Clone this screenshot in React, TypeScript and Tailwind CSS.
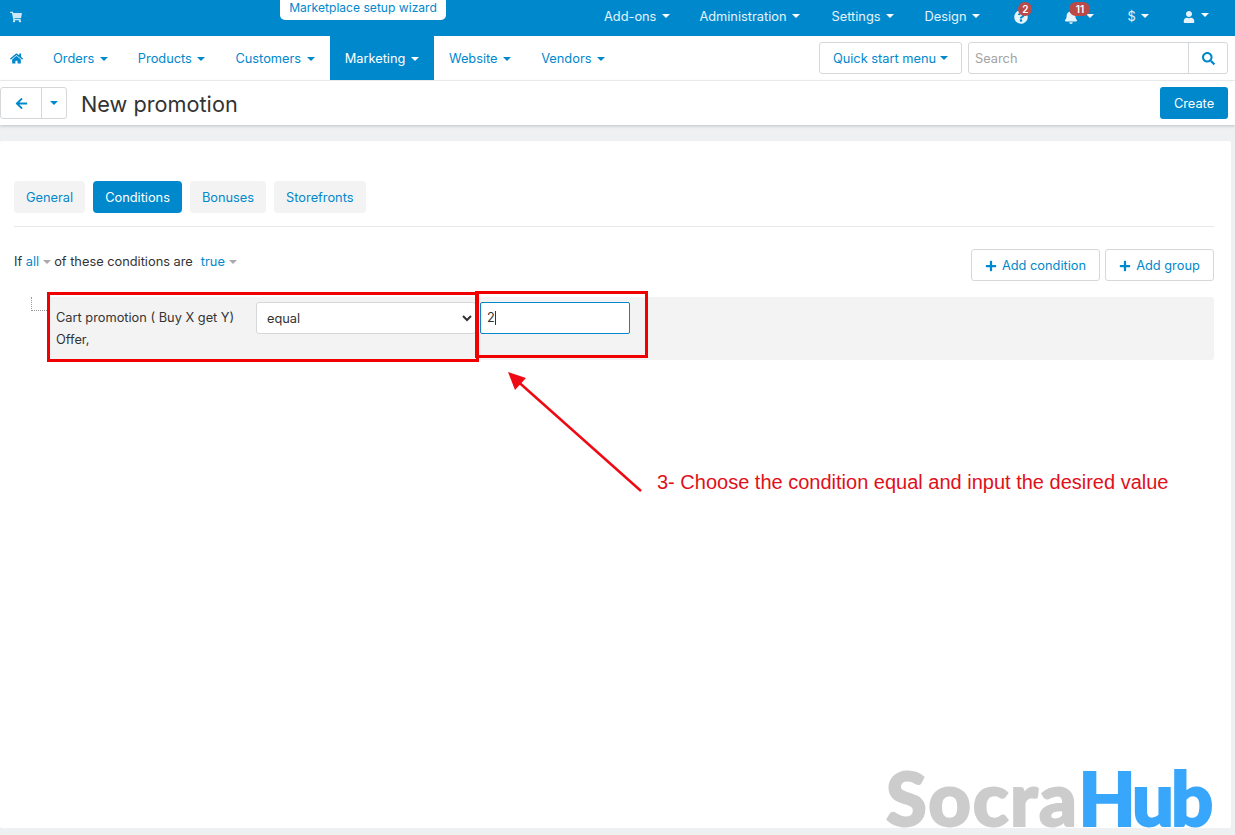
import { FaShoppingCart, FaHome, FaArrowLeft, FaPlus, FaSearch, FaBell, FaUser, FaQuestionCircle } from "react-icons/fa";

const topLinks = [
  { label: "Add-ons", gap: "mr-[29px]" },
  { label: "Administration", gap: "mr-[31px]" },
  { label: "Settings", gap: "mr-[30px]" },
  { label: "Design", gap: "mr-[34px]" },
];

const navLinks = ["Orders", "Products", "Customers", "Marketing", "Website", "Vendors"];

const tabs = ["General", "Conditions", "Bonuses", "Storefronts"];

function Caret({ className = "border-t-white" }: { className?: string }) {
  return <span className={`inline-block w-0 h-0 border-x-[4px] border-x-transparent border-t-[4px] ${className}`} />;
}

function Badge({ children, className }: { children: React.ReactNode; className: string }) {
  return (
    <span className={`absolute -top-[8px] h-[14px] rounded-full bg-[#b94a48] text-white text-[10px] font-semibold leading-[14px] text-center ${className}`}>
      {children}
    </span>
  );
}

export default function App() {
  return (
    <div className="relative w-[1235px] h-[835px] overflow-hidden bg-[#eef0f2] text-[12.8px] text-[#333] font-['Inter','Roboto',sans-serif]">
      {/* Top bar */}
      <header className="h-9 bg-[#0088cc] flex items-start text-white/90">
        <FaShoppingCart size={12} className="ml-[10px] mt-[11px] text-white/80" />
        <a className="ml-[258px] w-[166px] h-5 bg-white rounded-b-[5px] text-[#0088cc] text-center leading-[15px] text-[12.1px]">
          Marketplace setup wizard
        </a>
        <nav className="ml-[158px] flex items-center h-9 pb-[2px]">
          {topLinks.map(({ label, gap }) => (
            <span key={label} className={`flex items-center gap-[6px] ${gap}`}>
              {label}
              <Caret className="border-t-white -mt-[3px]" />
            </span>
          ))}
          <span className="relative mr-[36px]">
            <FaQuestionCircle size={14} />
            <Badge className="left-[4px] w-[14px]">2</Badge>
          </span>
          <span className="relative flex items-center gap-[8px] mr-[33px]">
            <FaBell size={14} />
            <Caret className="border-t-white -mt-[3px]" />
            <Badge className="left-[5px] w-[21px]">11</Badge>
          </span>
          <span className="flex items-center gap-[5px] mr-[34px]">
            $
            <Caret className="border-t-white -mt-[3px]" />
          </span>
          <span className="flex items-center gap-[6px] -mt-[1px]">
            <FaUser size={12} />
            <Caret className="border-t-white -mt-[3px]" />
          </span>
        </nav>
      </header>

      {/* Main nav */}
      <div className="h-[45px] bg-white border-b border-[#f0f0f0] flex items-stretch text-[#0088cc]">
        <span className="w-[38px] flex items-center pl-[10px]">
          <FaHome size={13} />
        </span>
        {navLinks.map((label) => (
          <a
            key={label}
            className={`flex items-center gap-[5.6px] px-[15px] pt-[2px] ${label === "Marketing" ? "bg-[#0088cc] text-white" : ""}`}
          >
            {label}
            <Caret className={label === "Marketing" ? "border-t-white" : "border-t-[#0088cc]"} />
          </a>
        ))}
        <div className="ml-auto flex items-center pr-[7px]">
          <button className="w-[143px] h-8 rounded-[3px] border border-[#d5d8db] pt-[2px] flex items-center justify-center gap-[4px]">
            Quick start menu
            <Caret className="border-t-[#0088cc] -mt-[2px]" />
          </button>
          <div className="ml-[6px] w-[260px] h-8 flex rounded-[3px] border border-[#d5d8db]">
            <span className="flex-1 pl-[6px] leading-[32px] text-[#a2a2a2]">Search</span>
            <span className="w-[39px] border-l border-[#d5d8db] flex items-center justify-center">
              <FaSearch size={13} />
            </span>
          </div>
        </div>
      </div>

      {/* Title bar */}
      <div className="h-[44px] bg-white shadow-[0_1px_3px_rgba(0,0,0,0.2)] flex items-center pr-[7px] relative">
        <div className="h-8 w-[67px] flex rounded-[3px] border border-[#d5d8db] text-[#0088cc]">
          <span className="w-[41px] border-r border-[#d5d8db] flex items-center justify-center">
            <FaArrowLeft size={13} />
          </span>
          <span className="flex-1 flex items-center justify-center">
            <Caret className="border-t-[#0088cc]" />
          </span>
        </div>
        <h1 className="ml-[14px] text-[21.7px] text-[#333] pt-[3px]">New promotion</h1>
        <button className="ml-auto w-[68px] h-8 rounded-[3px] bg-[#0088cc] text-white pt-[2px]">Create</button>
      </div>

      {/* Content */}
      <main className="mt-4 mr-1 h-[687px] bg-white rounded-[2px] px-[14px] pt-10 pr-[17px]">
        <div className="flex gap-2 pb-[13px] border-b border-[#e8e8e8]">
          {tabs.map((tab) => (
            <a
              key={tab}
              className={`h-8 px-3 leading-[34px] rounded-[4px] ${tab === "Conditions" ? "bg-[#0088cc] text-white" : "bg-[#f3f3f3] text-[#0088cc]"}`}
            >
              {tab}
            </a>
          ))}
        </div>

        <div className="flex items-start justify-between mt-[22px]">
          <p className="mt-[3px] flex items-center">
            If&nbsp;<span className="text-[#0088cc]">all</span>
            <Caret className="ml-[4px] border-t-[#aaa]" />
            <span className="ml-[3px]">of these conditions are</span>
            <span className="ml-2 text-[#0088cc]">true</span>
            <Caret className="ml-[4px] border-t-[#aaa]" />
          </p>
          <div className="flex gap-[5px] text-[#0088cc]">
            <button className="w-[129px] h-8 rounded-[3px] border border-[#d5d8db] pt-[1px] flex items-center justify-center gap-[5px]">
              <FaPlus size={12} />
              Add condition
            </button>
            <button className="w-[109px] h-8 rounded-[3px] border border-[#d5d8db] pt-[1px] flex items-center justify-center gap-[5px]">
              <FaPlus size={12} />
              Add group
            </button>
          </div>
        </div>

        {/* Condition row */}
        <div className="relative mt-4 ml-[33px] h-[63px] bg-[#f3f3f3] rounded-[3px] flex items-start pt-[5px] pl-[9px]">
          <span className="absolute -left-[16px] top-0 w-4 h-[14px] border-l border-b border-dotted border-[#999]" />
          <p className="w-[200px] leading-[22px] text-[#333] pt-[5px]">Cart promotion ( Buy X get Y) Offer,</p>
          <select
            defaultValue="equal"
            className="w-[220px] h-8 bg-white border border-[#d5d8db] rounded-[3px] pl-[6px] text-[12.8px] text-[#333]"
          >
            <option value="equal">equal</option>
          </select>
          <div className="ml-[4px] w-[150px] h-8 bg-white border border-[#0088cc] rounded-[2px] pl-[6px] leading-[30px] flex items-center">
            2<span className="w-px h-[14px] bg-[#333]" />
          </div>
        </div>
      </main>

      {/* Tutorial annotations */}
      <div className="absolute left-[47px] top-[292px] w-[432px] h-[70px] border-[3px] border-[#f00000]" />
      <div className="absolute left-[475px] top-[291px] w-[173px] h-[67px] border-[3px] border-[#f00000]" />
      <svg className="absolute left-[500px] top-[365px]" width="150" height="135" viewBox="0 0 150 135" fill="none">
        <path d="M141 126 L14 13" stroke="#ee0a14" strokeWidth="2.5" />
        <path d="M8 7 L26 13 L15 25 Z" fill="#ee0a14" />
      </svg>
      <span className="absolute left-[657px] top-[471px] font-['Liberation_Sans',sans-serif] text-[20px] leading-[23px] text-[#e0101a] whitespace-nowrap">
        3- Choose the condition equal and input the desired value
      </span>

      {/* Watermark */}
      <div className="absolute left-[886px] top-[763px] font-['Lato',sans-serif] font-black text-[74px] leading-[70px] tracking-[1.6px] text-[#cccccc] [-webkit-text-stroke-width:2px] whitespace-nowrap">
        Socra<span className="tracking-[-3px] text-[#38a6fb]">Hub</span>
      </div>
    </div>
  );
}
